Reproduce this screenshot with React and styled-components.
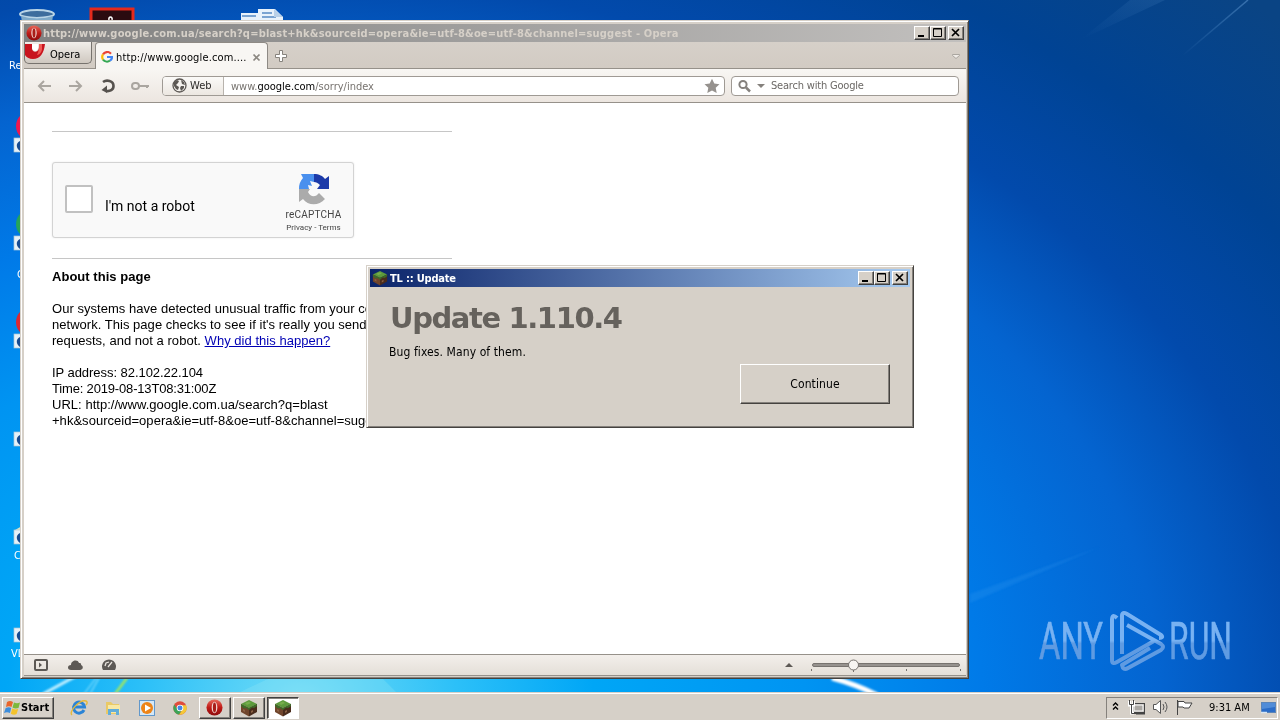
import React from "react";
import styled, { createGlobalStyle, css } from "styled-components";

const ui = `"DejaVu Sans Condensed", "DejaVu Sans", sans-serif`;

const App = () => {
  return (
    <Desktop>
      <GlobalStyle />
      <Wallpaper />
      <DesktopIcons />
      <Watermark />
      <BrowserWindow />
      <UpdateDialog />
      <Taskbar />
    </Desktop>
  );
};

const Wallpaper = () => (
  <Backdrop viewBox="0 0 1280 720" preserveAspectRatio="none">
    <defs>
      <filter id="soft">
        <feGaussianBlur stdDeviation="1" />
      </filter>
      <linearGradient id="ray" x1="0" y1="1" x2="1" y2="0">
        <stop offset="0" stopColor="#6fa8e0" stopOpacity="0" />
        <stop offset="1" stopColor="#6fa8e0" stopOpacity=".45" />
      </linearGradient>
    </defs>
    <path d="M1182 56L1248 0" stroke="url(#ray)" strokeWidth="1.5" />
    <path d="M1080 40L1165 0H1130Z" fill="url(#ray)" opacity=".3" />
    <g filter="url(#soft)" fill="none">
      <path d="M970 603L1100 547L970 594Z" fill="#4fa4f4" opacity=".18" />
      <path d="M43 694L76 676" stroke="#c8f2ff" strokeWidth="3" />
      <path d="M84 694L96 678M90 694L99 678" stroke="#a8ecff" strokeWidth="1" />
      <path d="M115 694L127 678" stroke="#a4e85c" strokeWidth="2.5" />
      <path d="M832 678Q855 684 877 695" stroke="#fff" strokeWidth="5" />
    </g>
    <path d="M238 693L270 678H382L397 693Z" fill="#a4ecf8" opacity=".22" />
  </Backdrop>
);

const shortcutTops = [138, 236, 334, 432, 530, 628];

const DesktopIcons = () => (
  <>
    <Backdrop viewBox="0 0 1280 720">
      <ellipse cx="37" cy="14" rx="17" ry="4" fill="#3d6d9d" stroke="#b9d4e6" strokeWidth="2" />
      <path d="M21 16L23 28H51L53 16Q37 21 21 16Z" fill="#7faac9" />
      <rect x="91" y="9" width="42" height="20" fill="#2b0b10" stroke="#e52a1c" strokeWidth="3" />
      <path d="M109 20C108 16 113 16 112 20" fill="none" stroke="#fff" strokeWidth="1.5" />
      <path d="M241 13H258V9H275L283 17V24H241Z" fill="#e8f2fb" />
      <path d="M242 16H256M262 13H272M262 17H276" stroke="#568ac5" strokeWidth="1.5" />
      <path d="M274 9V17H283Z" fill="#b8d0e8" />
      <circle cx="31" cy="126" r="15" fill="#ee174f" />
      <circle cx="31" cy="224" r="15" fill="#25a45a" />
      <circle cx="31" cy="322" r="15" fill="#dd2832" />
      <path d="M15 530L22 526V531Z" fill="#d8e4c8" />
      {shortcutTops.map((top) => (
        <g key={top}>
          <rect x="14" y={top} width="12" height="14" fill="#e6f1f8" stroke="#a9c6d8" strokeWidth=".7" />
          <path d={`M22 ${top + 2}C16 ${top + 4} 15 ${top + 9} 20 ${top + 13}V${top + 8}H22Z`} fill="#174b91" />
        </g>
      ))}
    </Backdrop>
    <IconLabel $x={9} $y={59}>Re</IconLabel>
    <IconLabel $x={17} $y={268}>G</IconLabel>
    <IconLabel $x={14} $y={549}>C</IconLabel>
    <IconLabel $x={11} $y={647}>VL</IconLabel>
  </>
);

const Watermark = () => (
  <Mark viewBox="0 0 204 68" width="204" height="68">
    <defs>
      <linearGradient id="mark" x1="0" y1="0" x2="0" y2="68" gradientUnits="userSpaceOnUse">
        <stop offset="0.48" stopColor="#78b2f2" />
        <stop offset="0.52" stopColor="#5f9be2" />
      </linearGradient>
    </defs>
    <g fill="url(#mark)" stroke="url(#mark)" strokeWidth=".6" fontFamily="Roboto" fontSize="52">
      <text x="3" y="51" textLength="64" lengthAdjust="spacingAndGlyphs">ANY</text>
      <text x="133" y="51" textLength="63" lengthAdjust="spacingAndGlyphs">RUN</text>
    </g>
    <g fill="none" stroke="url(#mark)" strokeWidth="4" strokeLinejoin="round">
      <path d="M81 10Q76 5 76 12V52Q76 57 81 54L118 33" />
      <path d="M86 46V8Q86 3 91 6L125 27Q128 30 123 30" />
      <path d="M91 17L125 36Q129 39 125 42L92 60Q87 63 86 57L114 40" />
    </g>
  </Mark>
);

const WindowButtons = () => (
  <Caption>
    <CaptionButton><Glyph viewBox="0 0 14 12"><path d="M3 9H9" stroke="#000" strokeWidth="2" /></Glyph></CaptionButton>
    <CaptionButton><Glyph viewBox="0 0 14 12"><path d="M2.5 1.5H10.5V9.5H2.5Z M2.5 2H10.5" fill="none" stroke="#000" /></Glyph></CaptionButton>
    <CaptionButton $gap><Glyph viewBox="0 0 14 12"><path d="M3 2L10 9M10 2L3 9" stroke="#000" strokeWidth="1.7" /></Glyph></CaptionButton>
  </Caption>
);

const OperaIcon = ({ size }) => (
  <svg width={size} height={size} viewBox="0 0 18 18">
    <defs>
      <linearGradient id="red" x1="0" y1="0" x2="0" y2="1">
        <stop offset="0" stopColor="#e86a5c" />
        <stop offset=".5" stopColor="#c01c18" />
        <stop offset="1" stopColor="#8e0b0d" />
      </linearGradient>
    </defs>
    <circle cx="9" cy="9" r="8.5" fill="url(#red)" />
    <ellipse cx="9" cy="9" rx="3" ry="6" fill="#f2dcd8" />
    <ellipse cx="9" cy="9" rx="1.700" ry="5.4" fill="#a81d18" />
  </svg>
);

const BlockIcon = ({ size }) => (
  <svg width={size} height={size} viewBox="0 0 18 18">
    <path d="M1 5L9 1L17 5L9 9Z" fill="#5c9a3c" />
    <path d="M1 5L9 9V17.500L1 13Z" fill="#70452c" />
    <path d="M17 5L9 9V17.500L17 13Z" fill="#4a2c1c" />
    <path d="M1 5L9 9L17 5V7L14 9L12 8.500L9 11L6 9L4 9.500L1 7Z" fill="#3c6b28" />
    <path d="M5 4L9 2.500L11 4L7 6Z" fill="#76ad4c" />
    <path d="M3 10L5 11V13L3 12ZM11 12L13 11V13L11 14Z" fill="#8c6244" />
  </svg>
);

const GoogleIcon = () => (
  <svg width="12" height="12" viewBox="0 0 12 12" fill="none" strokeWidth="2.2">
    <path d="M10 2.700A5 5 0 0 0 2 3.400" stroke="#ea4335" />
    <path d="M2 3.400A5 5 0 0 0 2 8.600" stroke="#fbbc05" />
    <path d="M2 8.600A5 5 0 0 0 9 9.500" stroke="#34a853" />
    <path d="M6 6H11C11 7.700 10 9 9 9.500" stroke="#4285f4" />
  </svg>
);

const BrowserWindow = () => (
  <Browser>
    <TitleBar $inactive>
      <OperaIcon size={16} />
      <TitleText $track={0.19} $inactive>
        http://www.google.com.ua/search?q=blast+hk&sourceid=opera&ie=utf-8&oe=utf-8&channel=suggest - Opera
      </TitleText>
      <WindowButtons />
    </TitleBar>
    <TabStrip>
      <OperaMenu>
        <svg width="22" height="18" viewBox="0 0 22 18">
          <path d="M0 2H7V6C7 11 13 11 14 6V2H20C19 11 15 17 8 17C4 17 1 15 0 13Z" fill="#c8141e" />
          <path d="M14 2H17V7C17 10 14 13 12 13C14 9 14 6 14 2Z" fill="#ef5a55" />
          <path d="M7 2H13V6C13 10 8 10 7 6Z" fill="#fff" />
        </svg>
        <Label>Opera</Label>
      </OperaMenu>
      <Tab>
        <GoogleIcon />
        <TabLabel>http://www.google.com....</TabLabel>
        <svg width="9" height="9" viewBox="0 0 9 9">
          <path d="M1.500 1.500L7.500 7.500M7.500 1.500L1.500 7.500" stroke="#8b8781" strokeWidth="1.700" />
        </svg>
      </Tab>
      <NewTab width="14" height="14" viewBox="0 0 14 14">
        <path d="M5.500 1.500H8.500V5.500H12.500V8.500H8.500V12.500H5.500V8.500H1.500V5.500H5.500Z" fill="#fff" stroke="#87837d" />
      </NewTab>
      <TabMenu width="10" height="7" viewBox="0 0 10 7">
        <path d="M1.500 1.500H8.500V2.500L5 5.500L1.500 2.500Z" fill="#f0ece7" stroke="#aaa6a0" />
      </TabMenu>
    </TabStrip>
    <AddressBar>
      <NavIcons width="112" height="18" viewBox="0 0 112 18">
        <g fill="none" stroke="#aaa6a0" strokeWidth="2">
          <path d="M1.500 9H14M7 4L2 9L7 14" />
          <path d="M32 9H44.500M39 4L44 9L39 14" />
        </g>
        <path d="M66 5C69.500 2.500 76.500 3.500 76.500 9C76.500 13 73 14.500 69 14" fill="none" stroke="#56524e" strokeWidth="2.600" />
        <path d="M64.500 13L70 8.500V16Z" fill="#56524e" />
        <g fill="none" stroke="#aaa6a0" strokeWidth="2">
          <rect x="95" y="6" width="7" height="6" rx="3" />
          <path d="M102 9H112M110 9V11" />
        </g>
      </NavIcons>
      <UrlField>
        <Badge>
          <svg width="15" height="15" viewBox="0 0 15 15">
            <circle cx="7.500" cy="7.500" r="6.500" fill="#f5f2ee" stroke="#5c5854" strokeWidth="1.300" />
            <path d="M2 4L5 2L7 3L6 5L4 7L7 9L6 12L4 11L2 8ZM9 2L12 4L13 7L10 6ZM9 8L12 8L12 10L9 13L8 10Z" fill="#5c5854" />
          </svg>
          <Label>Web</Label>
        </Badge>
        <Url>
          www.<b>google.com</b>/sorry/index
        </Url>
        <svg width="16" height="16" viewBox="0 0 16 16">
          <path d="M8 .8L10.300 5.600L15.500 6.200L11.700 9.800L12.700 15L8 12.400L3.300 15L4.300 9.800L.5 6.200L5.700 5.600Z" fill="#96928e" />
        </svg>
      </UrlField>
      <SearchField>
        <svg width="30" height="14" viewBox="0 0 30 14">
          <circle cx="5" cy="5.500" r="3.600" fill="none" stroke="#85817d" strokeWidth="2" />
          <path d="M8 8.500L12 12.500" stroke="#85817d" strokeWidth="2.500" />
          <path d="M19 5H27L23 9Z" fill="#85817d" />
        </svg>
        <Label $track={-0.19}>Search with Google</Label>
      </SearchField>
    </AddressBar>
    <Page>
      <Rule />
      <Captcha>
        <CheckBox />
        <CaptchaText>I'm not a robot</CaptchaText>
        <CaptchaBrand>
          <svg width="32" height="32" viewBox="0 0 32 32">
            <path d="M1 16A15 15 0 0 1 5 5L3 1H16V9L12 8L14 13L10 12L11 16Z" fill="#4a90ee" />
            <path d="M16 1C21 1 25 3 27 6L31 3V16H19L22 12C20 10 18 9 16 9Z" fill="#1c3aa9" />
            <path d="M1 16H12L10 19C13 25 18 24 21 20L27 26C21 33 10 33 5 26L1 29Z" fill="#ababab" />
          </svg>
          <BrandName>reCAPTCHA</BrandName>
          <BrandLinks>Privacy - Terms</BrandLinks>
        </CaptchaBrand>
      </Captcha>
      <Rule />
      <PageText>
        <b>About this page</b>
        <br />
        <br />
        Our systems have detected unusual traffic from your computer
        <br />
        network. This page checks to see if it's really you sending the
        <br />
        requests, and not a robot. <PageLink>Why did this happen?</PageLink>
        <br />
        <br />
        <Label $track={-0.05}>IP address: 82.102.22.104</Label>
        <br />
        <Label $track={-0.17}>Time: 2019-08-13T08:31:00Z</Label>
        <br />
        URL: http://www.google.com.ua/search?q=blast
        <br />
        +hk&sourceid=opera&ie=utf-8&oe=utf-8&channel=suggest
      </PageText>
    </Page>
    <StatusBar>
      <svg width="84" height="14" viewBox="0 0 84 14">
        <rect x="1" y="2" width="12" height="10" rx="1" fill="none" stroke="#5d5955" strokeWidth="2" />
        <path d="M5 4.500L8 7L5 9.500Z" fill="#5d5955" />
        <path d="M37 12C33 12 33 7 37 7C37 2 44 1 45 5C48 5 47 7 47 7C50 8 49 12 46 12Z" fill="#5d5955" />
        <path d="M69 12A7 7 0 1 1 81 12Z" fill="#5d5955" />
        <path d="M74 9L78 4M71 8L72 5L75 4" stroke="#e9e4de" strokeWidth="1.300" fill="none" />
      </svg>
      <svg width="178" height="16" viewBox="0 0 178 16">
        <path d="M1 10L5 6L9 10Z" fill="#5d5955" />
        <rect x="28.500" y="6.500" width="147" height="3" rx="1.500" fill="#96928e" stroke="#77736f" />
        <path d="M27.500 12V14M69.500 12V15M122.500 12V14M176.500 12V14" stroke="#77736f" />
        <circle cx="69.500" cy="8" r="5" fill="#f7f5f2" stroke="#77736f" />
      </svg>
    </StatusBar>
  </Browser>
);

const UpdateDialog = () => (
  <Dialog>
    <TitleBar>
      <BlockIcon size={16} />
      <TitleText $track={-0.2}>TL :: Update</TitleText>
      <WindowButtons />
    </TitleBar>
    <DialogBody>
      <Heading>Update 1.110.4</Heading>
      <Message>Bug fixes. Many of them.</Message>
      <Continue>Continue</Continue>
    </DialogBody>
  </Dialog>
);

const Taskbar = () => (
  <Bar>
    <Start>
      <svg width="17" height="16" viewBox="0 0 17 16">
        <path d="M3 2Q6 0 9 2L7.500 7Q5 5.500 2 7Z" fill="#e9652b" />
        <path d="M10 2.500Q13 4 16 2.500L14.500 8Q11 9 8.500 7.500Z" fill="#7cb83c" />
        <path d="M1.700 8Q5 6.500 7.200 8L6 13Q3 11.500 0 13Z" fill="#3c8ddc" />
        <path d="M8.200 8.600Q11 10 14.200 9L12.600 14Q10 15.500 6.800 13.800Z" fill="#f4c32c" />
      </svg>
      Start
    </Start>
    <Launchers>
      <svg width="18" height="18" viewBox="0 0 18 18">
        <path d="M14 11A5.500 5.500 0 1 1 14.500 8H5" fill="none" stroke="#2b84d6" strokeWidth="3" />
        <path d="M2 16C-2 13 10 0 16 2C18 3 17 5 16 6" fill="none" stroke="#e5b93a" strokeWidth="1.400" />
      </svg>
      <svg width="18" height="18" viewBox="0 0 18 18">
        <path d="M2 3H7L9 5H15V15H2Z" fill="#e9c966" />
        <path d="M4 6H16V14H4Z" fill="#f8e8a4" />
        <path d="M4 16V10H15V16H12V13H7V16Z" fill="#62add9" />
      </svg>
      <svg width="18" height="18" viewBox="0 0 18 18">
        <rect x="1.500" y="1.500" width="15" height="15" fill="#d5e8f7" stroke="#6298cb" />
        <circle cx="9" cy="9" r="6" fill="#ed8418" />
        <path d="M7 5.500L13 9L7 12.500Z" fill="#fff" />
      </svg>
      <svg width="16" height="16" viewBox="0 0 18 18">
        <circle cx="9" cy="9" r="7.500" fill="#e04c3c" />
        <path d="M2.500 5.200A7.500 7.500 0 0 0 8 16.400L12 10H6Z" fill="#3ca457" />
        <path d="M8 16.400A7.500 7.500 0 0 0 16 6H9L12.500 10Z" fill="#f4c937" />
        <circle cx="9" cy="9" r="3.700" fill="#fff" />
        <circle cx="9" cy="9" r="2.800" fill="#4486e4" />
      </svg>
    </Launchers>
    <Tasks>
      <Task><OperaIcon size={17} /></Task>
      <Task><BlockIcon size={18} /></Task>
      <Task $active><BlockIcon size={18} /></Task>
    </Tasks>
    <Tray>
      <svg width="90" height="18" viewBox="0 0 90 18">
        <path d="M5 6.500L7.500 4L10 6.500M5 10.500L7.500 8L10 10.500" fill="none" stroke="#000" strokeWidth="1.400" />
        <rect x="24.500" y="4.500" width="12" height="9" fill="#aaa7a3" stroke="#444" />
        <rect x="26" y="6" width="9" height="6" fill="none" stroke="#fff" />
        <path d="M28 14.500H37" stroke="#444" strokeWidth="2" />
        <path d="M21.500 2V6H23.500V14H26M25.500 2V6H23.500" fill="none" stroke="#fff" strokeWidth="3" />
        <path d="M21.500 1V5.500H25.500V1M23.500 6V14.500H28" fill="none" stroke="#444" />
        <path d="M45.500 5.500H48L52.500 1.500V14.500L48 10.500H45.500Z" fill="#fff" stroke="#555" />
        <path d="M55 5Q57 8 55 11M57 3Q61 8 57 13" fill="none" stroke="#555" />
        <path d="M69.500 1V16M70 2.500H76L77 4H84L81 9H76L75 8H70Z" fill="#fff" stroke="#444" />
      </svg>
      <Clock>9:31 AM</Clock>
      <svg width="16" height="16" viewBox="0 0 16 16">
        <rect x=".5" y="2.500" width="14" height="10" fill="#2a6cc8" stroke="#5a84b8" />
        <path d="M1 3H14V7L1 9Z" fill="#6ba2e2" opacity=".6" />
        <path d="M0 12.500H6" stroke="#d6e4f2" strokeWidth="1.500" />
      </svg>
    </Tray>
  </Bar>
);

const GlobalStyle = createGlobalStyle`
  * {
    box-sizing: border-box;
  }
  body {
    margin: 0;
    overflow: hidden;
  }
  svg {
    display: block;
    flex-shrink: 0;
  }
`;

const Desktop = styled.div`
  position: relative;
  display: flex;
  flex-direction: column;
  justify-content: flex-end;
  width: 1280px;
  height: 720px;
  overflow: hidden;
  font-family: ${ui};
  font-size: 11px;
  color: #000;
  background: radial-gradient(
    1050px 750px at 300px 700px,
    #72dcf6 0%,
    #2cc0f8 15%,
    #00a6f6 28%,
    #0094f2 48%,
    #007ae8 65%,
    #0464d0 82%,
    #024aac 96%,
    #004394 112%,
    #0a4484 130%
  );
`;

const Backdrop = styled.svg`
  position: absolute;
  inset: 0;
  width: 1280px;
  height: 720px;
`;

const IconLabel = styled.span`
  position: absolute;
  left: ${(p) => p.$x}px;
  top: ${(p) => p.$y}px;
  color: #fff;
  line-height: 13px;
`;

const Mark = styled.svg`
  position: absolute;
  left: 1036px;
  top: 608px;
  overflow: visible;
`;

const frame = css`
  position: absolute;
  display: flex;
  flex-direction: column;
  background: #d6d0c8;
  border: 1px solid;
  border-color: #d6d0c8 #45423f #45423f #d6d0c8;
  box-shadow: inset 1px 1px #fff, inset -1px -1px #85817c;
`;

const Browser = styled.div`
  ${frame}
  left: 20px;
  top: 20px;
  width: 949px;
  height: 659px;
  padding: 3px 2px 2px 3px;
`;

const Dialog = styled.div`
  ${frame}
  left: 366px;
  top: 265px;
  width: 548px;
  height: 163px;
  padding: 3px;
`;

const TitleBar = styled.div`
  display: flex;
  align-items: center;
  flex: none;
  height: 18px;
  padding: 0 2px;
  background: ${(p) =>
    p.$inactive
      ? "linear-gradient(90deg, #808080, #c2c0be)"
      : "linear-gradient(90deg, #0b246a, #a6caf0)"};
`;

const TitleText = styled.span`
  margin-left: ${(p) => (p.$inactive ? 1 : 2)}px;
  font-weight: bold;
  white-space: nowrap;
  letter-spacing: ${(p) => p.$track || 0}px;
  color: ${(p) => (p.$inactive ? "#d6d0c8" : "#fff")};
`;

const Caption = styled.div`
  display: flex;
  margin-left: auto;
`;

const CaptionButton = styled.span`
  width: 16px;
  height: 14px;
  margin-left: ${(p) => (p.$gap ? 2 : 0)}px;
  background: #d6d0c8;
  border: 1px solid;
  border-color: #fff #404040 #404040 #fff;
  box-shadow: inset -1px -1px #85817c;
`;

const Glyph = styled.svg`
  width: 14px;
  height: 12px;
`;

const TabStrip = styled.div`
  display: flex;
  flex: none;
  height: 27px;
  background: linear-gradient(#d6d0c9, #d2cbc3);
  border-bottom: 1px solid #96918a;
`;

const Label = styled.span`
  letter-spacing: ${(p) => p.$track || 0}px;
`;

const OperaMenu = styled.div`
  display: flex;
  width: 68px;
  height: 22px;
  gap: 3px;
  line-height: 25px;
  background: linear-gradient(#f1eeea, #cfc8c0);
  border: 1px solid #77736e;
  border-top: 0;
  border-radius: 0 0 5px 5px;
`;

const Tab = styled.div`
  display: flex;
  align-items: center;
  width: 173px;
  height: 27px;
  margin-left: 3px;
  padding: 2px 6px 0 5px;
  background: #f8f6f3;
  border: 1px solid #8e8a85;
  border-bottom: 0;
  border-radius: 4px 4px 0 0;
`;

const TabLabel = styled.span`
  flex: 1;
  margin-left: 3px;
  letter-spacing: 0.14px;
  white-space: nowrap;
`;

const NewTab = styled.svg`
  margin: 7px 0 0 6px;
`;

const TabMenu = styled.svg`
  margin: 11px 5px 0 auto;
`;

const AddressBar = styled.div`
  display: flex;
  align-items: center;
  flex: none;
  height: 34px;
  padding: 0 7px 0 13px;
  background: linear-gradient(#f8f6f3, #ece6e0);
  border-bottom: 1px solid #96918a;
`;

const NavIcons = styled.svg`
  margin-right: 13px;
`;

const field = css`
  display: flex;
  align-items: center;
  height: 20px;
  background: #fff;
  border: 1px solid #9f9a94;
  border-radius: 4px;
`;

const UrlField = styled.div`
  ${field}
  width: 563px;
  padding-right: 4px;
`;

const Badge = styled.div`
  display: flex;
  align-items: center;
  gap: 3px;
  width: 61px;
  height: 18px;
  padding-left: 9px;
  color: #2c2a28;
  background: linear-gradient(#fbfaf8, #ece7e1);
  border-right: 1px solid #b8b3ad;
  border-radius: 3px 0 0 3px;
`;

const Url = styled.span`
  flex: 1;
  padding: 1px 0 0 7px;
  color: #77736f;

  b {
    font-weight: normal;
    color: #000;
  }
`;

const SearchField = styled.div`
  ${field}
  width: 228px;
  margin-left: 6px;
  padding-left: 6px;
  gap: 3px;
  color: #6b6865;
`;

const Page = styled.div`
  flex: 1;
  padding: 28px 0 0 28px;
  overflow: hidden;
  background: #fff;
`;

const Rule = styled.div`
  width: 400px;
  height: 1px;
  background: #c6c6c6;
`;

const Captcha = styled.div`
  display: flex;
  width: 302px;
  height: 76px;
  margin: 30px 0 20px;
  padding-left: 12px;
  background: #f9f9f9;
  border: 1px solid #d3d3d3;
  border-radius: 3px;
  box-shadow: 0 0 2px rgba(0, 0, 0, 0.1);
`;

const CheckBox = styled.div`
  width: 28px;
  height: 28px;
  margin-top: 22px;
  background: #fff;
  border: 2px solid #c1c1c1;
  border-radius: 2px;
`;

const CaptchaText = styled.span`
  flex: 1;
  margin: 35px 0 0 12px;
  font: 14px/17px Roboto, sans-serif;
`;

const CaptchaBrand = styled.div`
  display: flex;
  flex-direction: column;
  align-items: center;
  width: 79px;
  padding-top: 10px;
  font-family: Roboto, sans-serif;
  color: #444;
`;

const BrandName = styled.span`
  margin-top: 3px;
  font-size: 10px;
  line-height: 13px;
  letter-spacing: 0.2px;
`;

const BrandLinks = styled.span`
  font-size: 8px;
  line-height: 13px;
`;

const PageText = styled.div`
  margin-top: 10px;
  font: 13px/16px "Liberation Sans", sans-serif;
  letter-spacing: 0.03px;
  white-space: nowrap;
`;

const PageLink = styled.span`
  color: #0000b4;
  text-decoration: underline;
`;

const StatusBar = styled.div`
  display: flex;
  align-items: center;
  justify-content: space-between;
  flex: none;
  height: 22px;
  padding: 0 4px 0 10px;
  background: linear-gradient(#f3efeb, #e4dfd8);
  border-top: 1px solid #96918a;
  border-bottom: 1px solid #96918a;
`;

const DialogBody = styled.div`
  display: flex;
  flex-direction: column;
  flex: 1;
  padding: 13px 20px 0 19px;
`;

const Heading = styled.h1`
  margin: 0 0 0 1px;
  font: bold 29px/36px "DejaVu Sans", sans-serif;
  letter-spacing: -1.4px;
  color: #66625d;
  white-space: nowrap;
`;

const Message = styled.p`
  margin: 9px 0 4px;
  font-size: 12px;
  line-height: 15px;
  letter-spacing: 0.1px;
`;

const Continue = styled.button`
  align-self: flex-end;
  width: 150px;
  height: 40px;
  padding: 0;
  font: 12px ${ui};
  letter-spacing: 0.1px;
  color: #000;
  background: #d6d0c8;
  border: 1px solid;
  border-color: #fff #45423f #45423f #fff;
  box-shadow: inset -1px -1px #85817c;
`;

const Bar = styled.div`
  position: relative;
  display: flex;
  align-items: center;
  height: 28px;
  padding: 2px 2px 0;
  background: #d6d0c8;
  border-top: 1px solid #d6d0c8;
  box-shadow: inset 0 1px #fff;
`;

const raised = css`
  border: 1px solid;
  border-color: #fff #404040 #404040 #fff;
  box-shadow: inset -1px -1px #85817c;
`;

const Start = styled.div`
  ${raised}
  display: flex;
  align-items: center;
  width: 52px;
  height: 22px;
  padding-left: 1px;
  font-weight: bold;
`;

const Launchers = styled.div`
  display: flex;
  align-items: center;
  gap: 16px;
  margin-left: 16px;
`;

const Tasks = styled.div`
  display: flex;
  gap: 2px;
  margin-left: 11px;
`;

const Task = styled.div`
  ${raised}
  display: flex;
  align-items: center;
  justify-content: center;
  width: 32px;
  height: 22px;
  padding-right: 1px;
  ${(p) =>
    p.$active &&
    css`
      background: #fff;
      border-color: #404040 #fff #fff #404040;
      box-shadow: inset 1px 1px #85817c;
    `}
`;

const Tray = styled.div`
  display: flex;
  align-items: center;
  width: 172px;
  height: 22px;
  margin-left: auto;
  padding-left: 1px;
  border: 1px solid;
  border-color: #85817c #fff #fff #85817c;
`;

const Clock = styled.span`
  width: 50px;
  margin: 0 5px 0 11px;
  white-space: nowrap;
`;

export default App;
